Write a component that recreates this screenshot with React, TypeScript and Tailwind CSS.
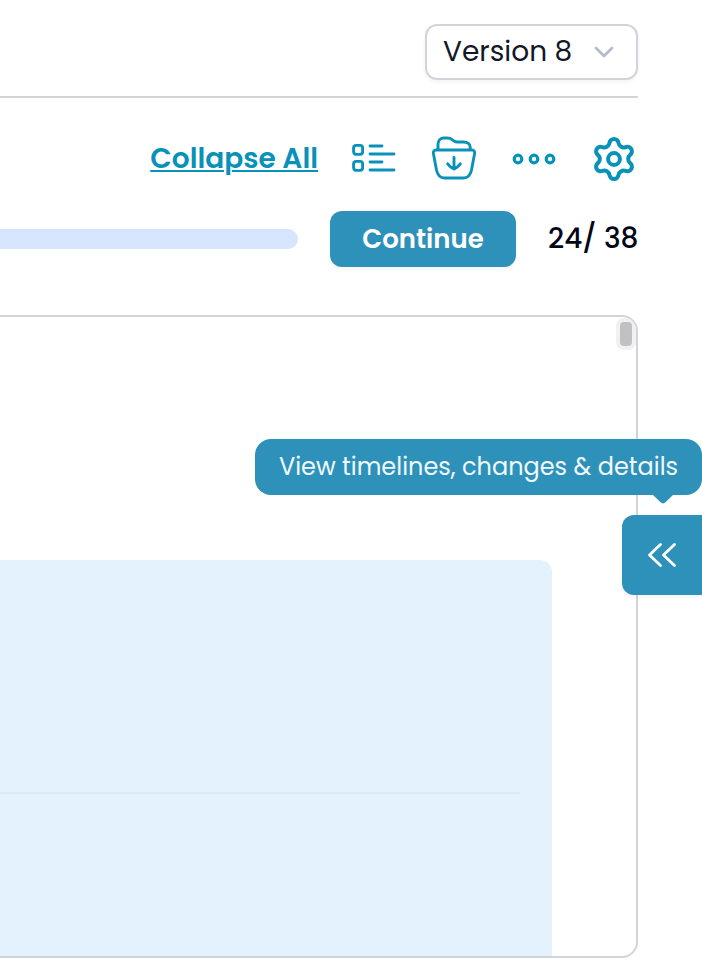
import React from "react";

function ListIcon() {
  return (
    <svg className="size-12 shrink-0" viewBox="0 0 48 48" fill="none" stroke="currentColor" strokeWidth="2.9" strokeLinecap="round">
      <rect x="3.6" y="10.4" width="9" height="9" rx="2.6" />
      <rect x="3.6" y="26.4" width="9" height="9" rx="2.6" />
      <path d="M20 11H32M20 19H44M20 27H32M20 35H44" />
    </svg>
  );
}

function FolderDownIcon() {
  return (
    <svg className="size-12 shrink-0" viewBox="0 0 48 48" fill="none" stroke="currentColor" strokeWidth="2.9" strokeLinecap="round" strokeLinejoin="round">
      <path d="M6 15H42C44 15 45 16.500 44.600 18.500L41.500 35C40.200 41 37.500 43 33.500 43H14.500C10.500 43 7.800 41 6.500 35L3.400 18.500C3 16.500 4 15 6 15Z" />
      <path d="M8 14.500V9.500C8 5.500 10.500 3 14 3H17C19.500 3 21 3.500 22.500 4.800L24.500 6.300C25.500 7 26 7 27.500 7H33.500C37.500 7 40.200 9 40.200 12V14.500" />
      <path d="M24 22.500V34M17.700 28.800C19.500 31.300 21.800 33.300 24 34C26.200 33.300 28.500 31.300 30.300 28.800" />
    </svg>
  );
}

function MoreIcon() {
  return (
    <svg className="size-12 shrink-0" viewBox="0 0 48 48" fill="none" stroke="currentColor" strokeWidth="3.2">
      <circle cx="8" cy="24" r="3.800" />
      <circle cx="24" cy="24" r="3.800" />
      <circle cx="40" cy="24" r="3.800" />
    </svg>
  );
}

function GearIcon() {
  return (
    <svg className="size-12 shrink-0" viewBox="-24 -24 48 48" fill="none" stroke="currentColor" strokeWidth="4" strokeLinejoin="round">
      <path d="M-4.550 -16.060A4.600 4.600 0 0 1 4.550 -16.060A5.200 5.200 0 0 0 11.630 -11.970A4.600 4.600 0 0 1 16.180 -4.090A5.200 5.200 0 0 0 16.180 4.090A4.600 4.600 0 0 1 11.630 11.970A5.200 5.200 0 0 0 4.550 16.060A4.600 4.600 0 0 1 -4.550 16.060A5.200 5.200 0 0 0 -11.630 11.970A4.600 4.600 0 0 1 -16.180 4.090A5.200 5.200 0 0 0 -16.180 -4.090A4.600 4.600 0 0 1 -11.630 -11.970A5.200 5.200 0 0 0 -4.550 -16.060Z" />
      <circle r="5.900" />
    </svg>
  );
}

export default function App() {
  return (
    <div className="relative flex h-[966px] w-[702px] flex-col overflow-hidden bg-white pr-16 pb-2 font-[Poppins,Inter,sans-serif]">
      <header className="flex h-[98px] shrink-0 items-start justify-end border-b-2 border-[#d1d5db] pt-6">
        <button className="flex h-14 w-[213px] items-center justify-between rounded-xl border-2 border-[#d1d5db] bg-white pr-5 pl-4 shadow-[0_2px_4px_rgba(0,0,0,0.05)]">
          <span className="text-[28px] leading-10 whitespace-nowrap text-[#111827]">Version 8</span>
          <svg className="h-6 w-6" viewBox="0 0 24 24" fill="none" stroke="#b0bccb" strokeWidth="2.6" strokeLinecap="round" strokeLinejoin="round">
            <path d="M4 8L12 16L20 8" />
          </svg>
        </button>
      </header>

      <div className="mt-[37px] flex h-12 shrink-0 items-center justify-end gap-8 text-[#0891b9]">
        <a className="text-[28px] leading-10 font-semibold whitespace-nowrap underline decoration-2 underline-offset-2">Collapse All</a>
        <ListIcon />
        <FolderDownIcon />
        <MoreIcon />
        <GearIcon />
      </div>

      <div className="mt-7 flex h-14 shrink-0 items-center gap-8">
        <div className="h-5 flex-1 rounded-r-full bg-[#d8e5fe]" />
        <button className="h-14 w-[186px] rounded-xl bg-[#2e91b9] text-[26px] font-semibold text-white shadow-[0_2px_4px_rgba(0,0,0,0.05)]">Continue</button>
        <span className="w-[90px] text-left text-[28px] leading-10 font-medium whitespace-nowrap text-[#020617]">24/ 38</span>
      </div>

      <main className="mt-12 flex min-h-0 flex-1 items-start justify-between overflow-hidden rounded-r-2xl border-2 border-l-0 border-[#d1d5db]">
        <section className="mt-[243px] h-[396px] w-[552px] rounded-tr-xl bg-[#e3f2fd] pr-8">
          <div className="h-[234px] border-b-2 border-[#dfe8f1]" />
        </section>
        <div className="mt-px h-8 w-5 rounded-lg bg-[#f1f1f1] p-1">
          <div className="h-6 w-3 rounded bg-[#c1c1c1]" />
        </div>
      </main>

      <div className="absolute top-[439px] right-0 flex h-14 w-[447px] items-center justify-center rounded-2xl bg-[#2e91b9]">
        <span className="text-2xl whitespace-nowrap text-[#f0f9ff]">View timelines, changes &amp; details</span>
        <svg className="absolute top-[55px] right-7 h-[10px] w-[22px]" viewBox="0 0 22 10" fill="#2e91b9">
          <path d="M0 0H22L13.500 8.300Q11 10.500 8.500 8.300Z" />
        </svg>
      </div>
      <button className="absolute top-[515px] right-0 flex h-20 w-20 items-center justify-center rounded-l-xl bg-[#2e91b9] shadow-[0_2px_4px_rgba(0,0,0,0.05)]">
        <svg className="h-8 w-8" viewBox="0 0 32 32" fill="none" stroke="white" strokeWidth="2.8" strokeLinecap="round" strokeLinejoin="round">
          <path d="M14.500 5.500L3.500 16L14.500 26.500M28.500 5.500L17.500 16L28.500 26.500" />
        </svg>
      </button>
    </div>
  );
}
